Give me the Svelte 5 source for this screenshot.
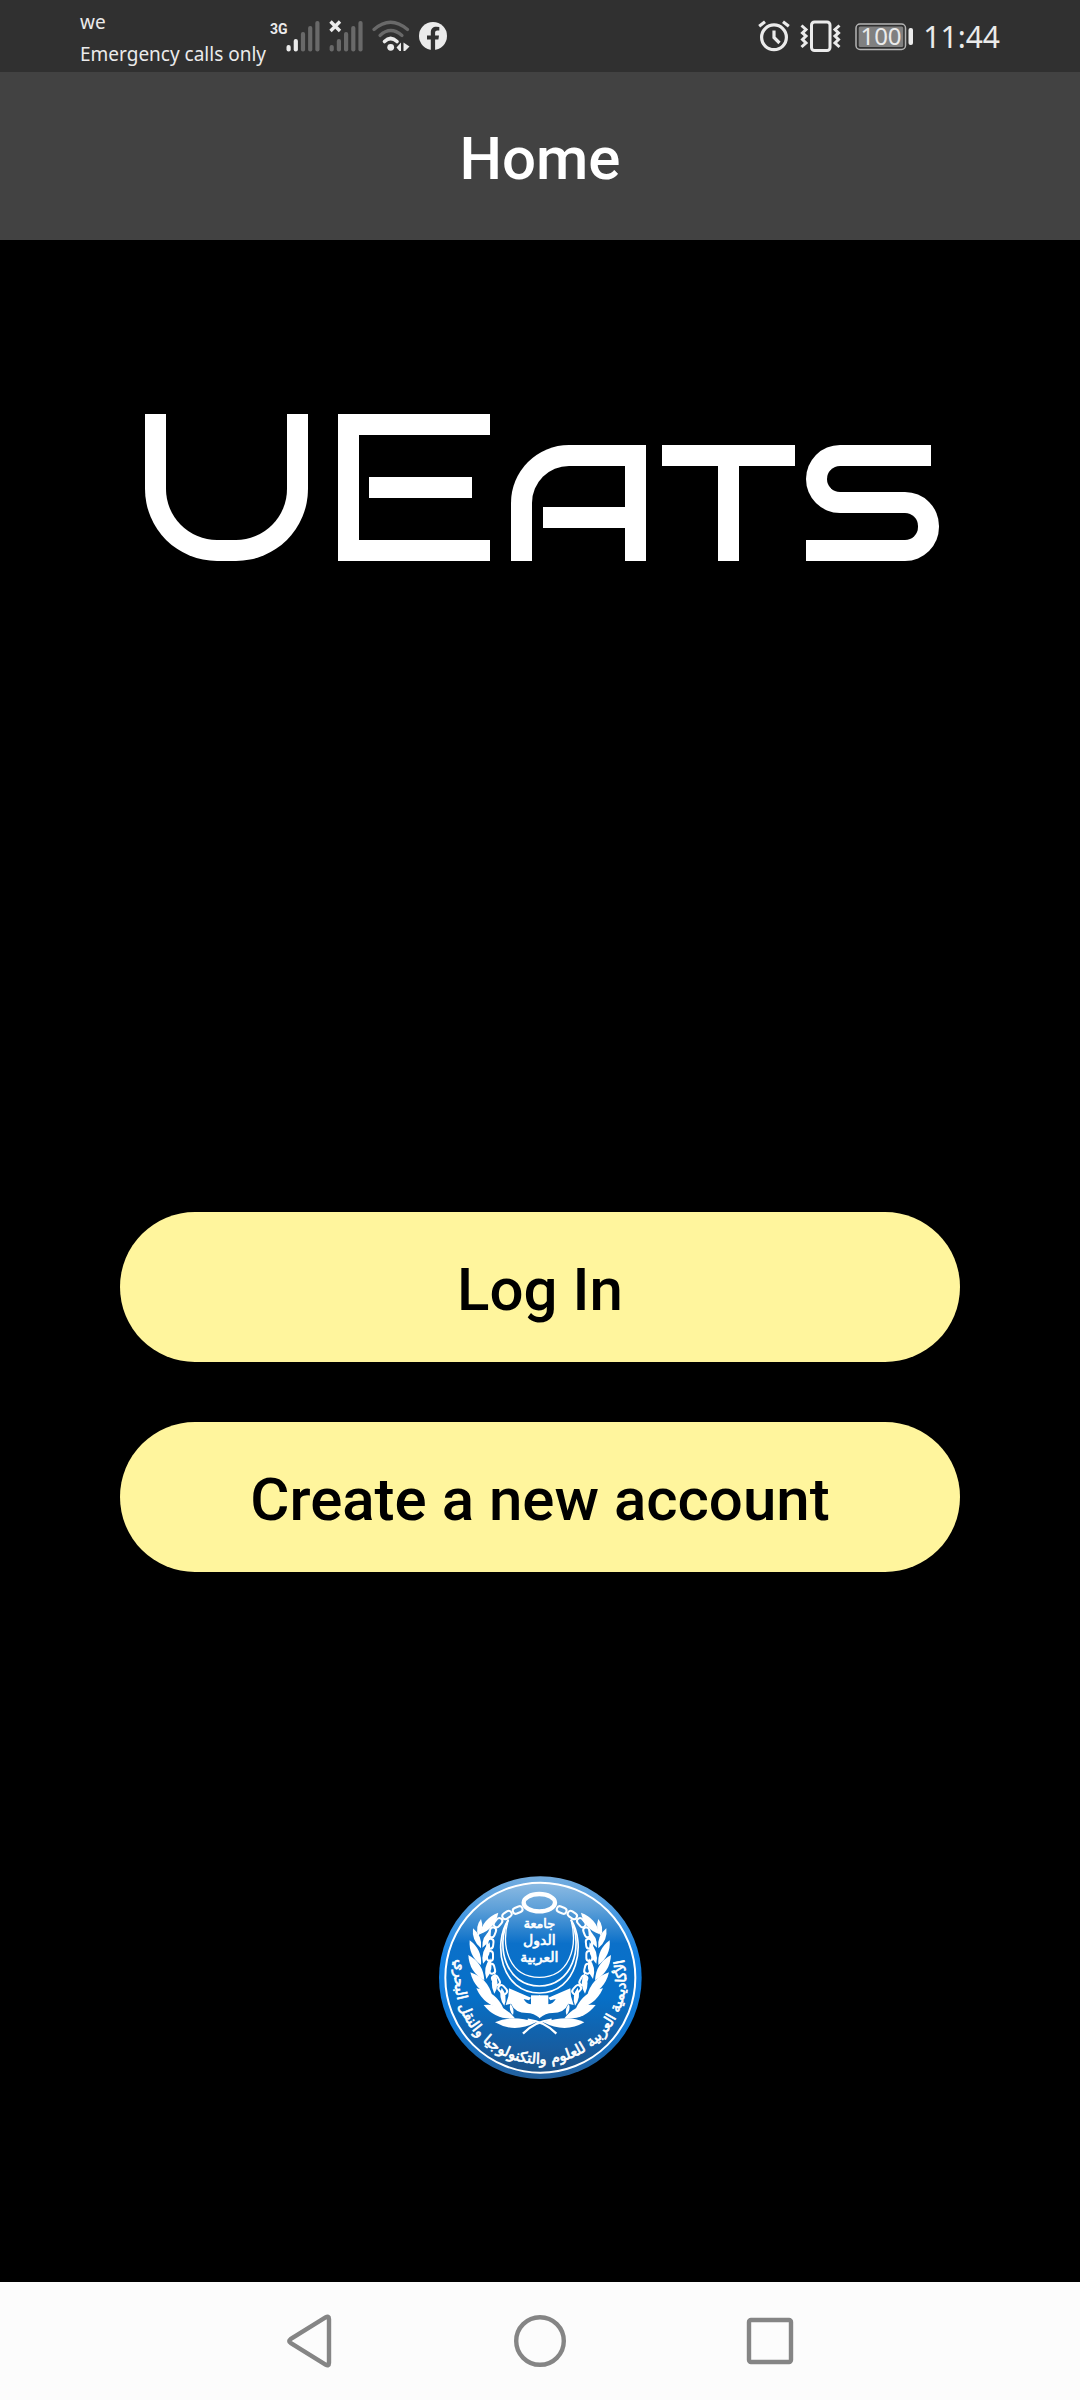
<script>
  const barTops = [25, 19, 12, 6, 1];

  // One half of the laurel wreath: [base x, base y, tip x, tip y]
  const leaves = [
    [176, 222, 232, 157],
    [172, 228, 180, 176],
    [180, 264, 156, 204],
    [184, 262, 210, 208],
    [180, 314, 146, 240],
    [186, 310, 206, 246],
    [190, 360, 142, 284],
    [196, 356, 208, 294],
    [214, 408, 148, 336],
    [220, 400, 222, 338],
    [248, 446, 166, 384],
    [250, 436, 242, 382],
    [282, 474, 188, 434],
    [276, 464, 268, 430],
  ];

  // One half of the chain: [x, y, rotation]
  const links = [
    [290, 149, -22],
    [258, 164, -35],
    [231, 187, -50],
    [214, 216, -68],
    [208, 250, -84],
    [207, 287, 90],
    [212, 325, 76],
    [225, 360, 62],
    [245, 388, 48],
  ];

  function leafPath([bx, by, tx, ty]) {
    const dx = tx - bx;
    const dy = ty - by;
    const w = 0.28;
    const mx = bx + dx * 0.5;
    const my = by + dy * 0.5;
    return `M${bx} ${by}Q${mx - dy * w} ${my + dx * w} ${tx} ${ty}Q${mx + dy * w} ${my - dx * w} ${bx} ${by}Z`;
  }
</script>

<div class="screen">
  <div class="status">
    <div class="carrier">
      <span>we</span>
      <span>Emergency calls only</span>
    </div>
    <div class="indicators">
      <svg width="50" height="32" viewBox="0 0 50 32" role="img" aria-label="3G signal">
        <text class="net" x="0" y="14">3G</text>
        {#each barTops as top, i}
          <rect x={16.5 + i * 7.2} y={top} width="4.2" height={31.5 - top} rx="2" fill={i < 2 ? '#ebebeb' : '#696969'} />
        {/each}
      </svg>
      <svg width="34" height="32" viewBox="0 0 34 32" role="img" aria-label="No signal">
        {#each barTops as top, i}
          <rect x={0.6 + i * 7.2} y={top} width="4.2" height={31.5 - top} rx="2" fill="#696969" />
        {/each}
        <path d="M1.500 1.500L11 11M11 1.500L1.500 11" stroke="#ebebeb" stroke-width="3.4" />
      </svg>
      <svg width="38" height="32" viewBox="0 0 38 32" role="img" aria-label="Wi-Fi">
        <g fill="none" stroke-width="3.2" stroke-linecap="round">
          <path d="M2 9.5Q18.5 -5 35.500 9.500" stroke="#696969" />
          <path d="M8 15.500Q18.500 5.500 30 15.500" stroke="#696969" />
          <path d="M12.500 21.500Q18.500 15.500 25 21.500" stroke="#ebebeb" stroke-width="3.600" />
        </g>
        <circle cx="18.700" cy="27.300" r="3.400" fill="#ebebeb" />
        <path d="M24.500 27.500L29 22.500V31H27.500ZM31.500 22.500L37.500 26.500L33 31H31.500Z" fill="#ebebeb" />
      </svg>
      <svg width="28" height="28" viewBox="0 0 28 28" role="img" aria-label="Facebook">
        <circle cx="14" cy="14" r="14" fill="#ebebeb" />
        <path d="M11.800 28V17.500H8V13.500H11.800V10.500C11.800 6.800 14 4.800 17.300 4.800L20.300 5.100V8.600H18.400C16.700 8.600 16.100 9.600 16.100 10.700V13.500H20L19.400 17.500H16.100V28Z" fill="#303030" />
      </svg>
    </div>
    <div class="system">
      <svg width="32" height="32" viewBox="0 0 32 32" role="img" aria-label="Alarm">
        <g fill="none" stroke="#ebebeb" stroke-width="3.200">
          <circle cx="16" cy="17.300" r="12.400" />
          <path d="M1.200 6.200L7 1.800M30.800 6.200L25 1.800" />
          <path d="M16 10.500V17.500L21.500 23" />
        </g>
      </svg>
      <svg width="41" height="32" viewBox="0 0 41 32" role="img" aria-label="Vibrate">
        <g fill="none" stroke="#ebebeb" stroke-width="3">
          <rect x="11.500" y="2" width="18.500" height="28.500" rx="3" />
          <path d="M1.500 5.500L6 9.500L2.500 13L6 16L2.500 19.500L6 23L1.500 27M39.500 5.500L35 9.500L38.500 13L35 16L38.500 19.500L35 23L39.500 27" />
        </g>
      </svg>
      <svg class="battery" width="58" height="32" viewBox="0 0 58 32" role="img" aria-label="Battery 100 percent">
        <rect x="1" y="4" width="49.500" height="25.500" rx="4" fill="none" stroke="#b4b4b4" stroke-width="1.500" />
        <rect x="3.700" y="6.500" width="44.500" height="20.500" rx="1.500" fill="#808080" />
        <rect x="53.500" y="8" width="4.500" height="17" rx="2" fill="#ebebeb" />
        <text class="level" x="26" y="25" text-anchor="middle">100</text>
      </svg>
      <time>11:44</time>
    </div>
  </div>

  <header><h1>Home</h1></header>

  <main>
    <div class="logo" role="img" aria-label="UEats">
      <div class="u"></div>
      <div class="e"></div>
      <div class="a"></div>
      <div class="t"></div>
      <div class="s"></div>
    </div>

    <div class="actions">
      <button type="button">Log In</button>
      <button type="button">Create a new account</button>
    </div>

    <svg class="emblem" viewBox="54 47 609 609" role="img" aria-label="Academy emblem">
      <defs>
        <linearGradient id="disc" x1="0" y1="0" x2="0" y2="1">
          <stop offset="0" stop-color="#8dbbe3" />
          <stop offset="0.140" stop-color="#5c9fd8" />
          <stop offset="0.320" stop-color="#0b70c9" />
          <stop offset="0.600" stop-color="#0670c8" />
          <stop offset="0.880" stop-color="#175c9f" />
          <stop offset="1" stop-color="#1c5288" />
        </linearGradient>
        <linearGradient id="rim" x1="0" y1="0" x2="0" y2="1">
          <stop offset="0" stop-color="#74addf" />
          <stop offset="0.400" stop-color="#1482e4" />
          <stop offset="0.750" stop-color="#1078d4" />
          <stop offset="1" stop-color="#245f9b" />
        </linearGradient>
        <path id="arc" d="M109 290A257 257 0 1 0 607 290" />
        <g id="half">
          {#each leaves as leaf}
            <path d={leafPath(leaf)} fill="#fff" />
          {/each}
          {#each links as [x, y, r]}
            <rect x={x - 15} y={y - 9} width="30" height="18" rx="9" transform="rotate({r} {x} {y})" fill="none" stroke="#fff" stroke-width="6" />
          {/each}
          <path d="M222 486Q270 462 345 486Q280 520 222 486Z" fill="#fff" />
          <path d="M264 384L330 412L324 420L308 416Q316 432 332 432L357 404V474Q338 458 318 458Q282 458 270 430L254 434L262 408Z" fill="#fff" />
          <path d="M306 520Q340 484 392 478" fill="none" stroke="#fff" stroke-width="7" />
        </g>
      </defs>
      <circle cx="358" cy="352" r="304" fill="url(#rim)" />
      <circle cx="358" cy="352" r="285" fill="url(#disc)" stroke="#fff" stroke-width="6" />
      <use href="#half" />
      <use href="#half" transform="matrix(-1 0 0 1 712 0)" />
      <rect x="330" y="405" width="52" height="30" fill="#fff" />
      <ellipse cx="355" cy="127" rx="47" ry="26" fill="none" stroke="#fff" stroke-width="13" />
      <g fill="none" stroke="#fff">
        <path d="M262 178C214 250 240 398 355 398C470 398 496 250 450 178" stroke-width="5" />
        <path d="M262 178C222 260 256 377 355 377C454 377 488 260 450 178" stroke-width="5" />
        <path d="M262 178C238 262 266 351 355 351C444 351 472 262 450 178" stroke-width="4" />
      </g>
      <g class="script" text-anchor="middle">
        <text x="355" y="202" font-size="38">جامعة</text>
        <text x="355" y="254" font-size="42">الدول</text>
        <text x="355" y="306" font-size="42">العربية</text>
      </g>
      <text class="ring" text-anchor="middle" font-size="44">
        <textPath href="#arc" startOffset="50%">الأكاديمية العربية للعلوم والتكنولوجيا والنقل البحري</textPath>
      </text>
    </svg>
  </main>

  <nav aria-label="System navigation">
    <button type="button" aria-label="Back">
      <svg width="52" height="56" viewBox="0 0 52 56"><path d="M41.500 4.500Q45 2.500 45 6V50Q45 53.500 41.500 51.500L6.500 29.800Q4 28 6.500 26.200Z" /></svg>
    </button>
    <button type="button" aria-label="Home">
      <svg width="52" height="52" viewBox="0 0 52 52"><circle cx="26" cy="26" r="23.800" /></svg>
    </button>
    <button type="button" aria-label="Recent apps">
      <svg width="48" height="48" viewBox="0 0 48 48"><rect x="3" y="3" width="42" height="42" rx="2" /></svg>
    </button>
  </nav>
</div>

<style>
  :global(body) {
    background: #000;
  }

  .screen {
    display: flex;
    flex-direction: column;
    min-height: 100vh;
    background: #000;
    color: #fff;
    font-family: Roboto, 'Liberation Sans', sans-serif;
  }

  svg {
    display: block;
    flex: none;
  }

  .status {
    display: flex;
    align-items: center;
    height: 72px;
    padding: 0 80px;
    background: #303030;
    color: #ebebeb;
    font-family: 'Noto Sans', 'Open Sans', sans-serif;
  }

  .carrier {
    display: flex;
    flex-direction: column;
    gap: 2px;
    padding-top: 4px;
    font-size: 19px;
    line-height: 30px;
    white-space: nowrap;
  }

  .indicators {
    display: flex;
    align-items: center;
    gap: 9px;
    margin-left: 4px;
  }

  .net {
    font: 700 14px Roboto, sans-serif;
    fill: #ebebeb;
  }

  .system {
    display: flex;
    align-items: center;
    gap: 10px;
    margin-left: auto;
  }

  .battery {
    margin-left: 4px;
  }

  .level {
    font-size: 24px;
    fill: #ebebeb;
  }

  time {
    padding-top: 2px;
    font-size: 30px;
    line-height: 40px;
  }

  header {
    display: flex;
    align-items: center;
    justify-content: center;
    height: 168px;
    background: #424242;
  }

  h1 {
    margin: 0;
    padding-top: 6px;
    font-size: 60px;
    font-weight: 500;
    line-height: 70px;
  }

  main {
    flex: 1;
    display: flex;
    flex-direction: column;
    align-items: center;
    padding: 174px 120px 200px;
  }

  .logo {
    display: flex;
    align-items: flex-end;
    padding-left: 3px;
  }

  .logo div {
    box-sizing: border-box;
    flex: none;
    border: 0 solid #fff;
  }

  .u {
    width: 163px;
    height: 147px;
    margin-right: 30px;
  }

  .logo .u {
    border-width: 0 21px 21px;
    border-radius: 0 0 72px 72px;
  }

  .e {
    display: flex;
    align-items: center;
    width: 152px;
    height: 147px;
    margin-right: 21px;
    padding: 0 18px 0 10px;
  }

  .logo .e {
    border-width: 21px 0 21px 21px;
  }

  .e::before {
    content: '';
    flex: 1;
    height: 21px;
    background: #fff;
  }

  .a {
    display: flex;
    width: 135px;
    height: 116px;
    margin-right: 16px;
    padding: 41px 0 0 11px;
  }

  .logo .a {
    border-width: 21px 21px 0;
    border-top-left-radius: 58px;
  }

  .a::before {
    content: '';
    flex: 1;
    height: 21px;
    background: #fff;
  }

  .t {
    display: flex;
    justify-content: center;
    width: 133px;
    height: 116px;
    margin-right: 11px;
  }

  .logo .t {
    border-top-width: 21px;
  }

  .t::before {
    content: '';
    width: 21px;
    background: #fff;
  }

  .s {
    display: grid;
    grid-template-columns: 1fr 1fr;
    grid-template-rows: 116px;
    width: 133px;
    height: 116px;
    background:
      linear-gradient(#fff, #fff) 60px 0 / 65px 21px no-repeat,
      linear-gradient(#fff, #fff) 0 100% / 70px 21px no-repeat;
  }

  .s::before,
  .s::after {
    content: '';
    box-sizing: border-box;
    border: 21px solid #fff;
  }

  .s::before {
    height: 68px;
    border-right: 0;
    border-radius: 34px 0 0 34px;
  }

  .s::after {
    align-self: end;
    height: 69px;
    border-left: 0;
    border-radius: 0 34px 34px 0;
  }

  .actions {
    display: flex;
    flex-direction: column;
    align-self: stretch;
    gap: 60px;
    margin-top: 651px;
  }

  .actions button {
    height: 150px;
    padding: 6px 0 0;
    border: 0;
    border-radius: 75px;
    background: #fff59d;
    color: #000;
    font: 500 60px/70px Roboto, 'Liberation Sans', sans-serif;
  }

  .emblem {
    width: 203px;
    height: 203px;
    margin-top: 304px;
  }

  .script,
  .ring {
    fill: #fff;
    stroke: #fff;
    stroke-width: 2px;
    font-family: 'DejaVu Sans', sans-serif;
  }

  nav {
    display: grid;
    grid-template-columns: repeat(3, 1fr);
    height: 118px;
    padding: 0 18%;
    background: #fcfcfc;
  }

  nav button {
    display: flex;
    align-items: center;
    justify-content: center;
    padding: 0;
    border: 0;
    background: none;
  }

  nav svg {
    fill: none;
    stroke: #858585;
    stroke-width: 4.4px;
  }
</style>
